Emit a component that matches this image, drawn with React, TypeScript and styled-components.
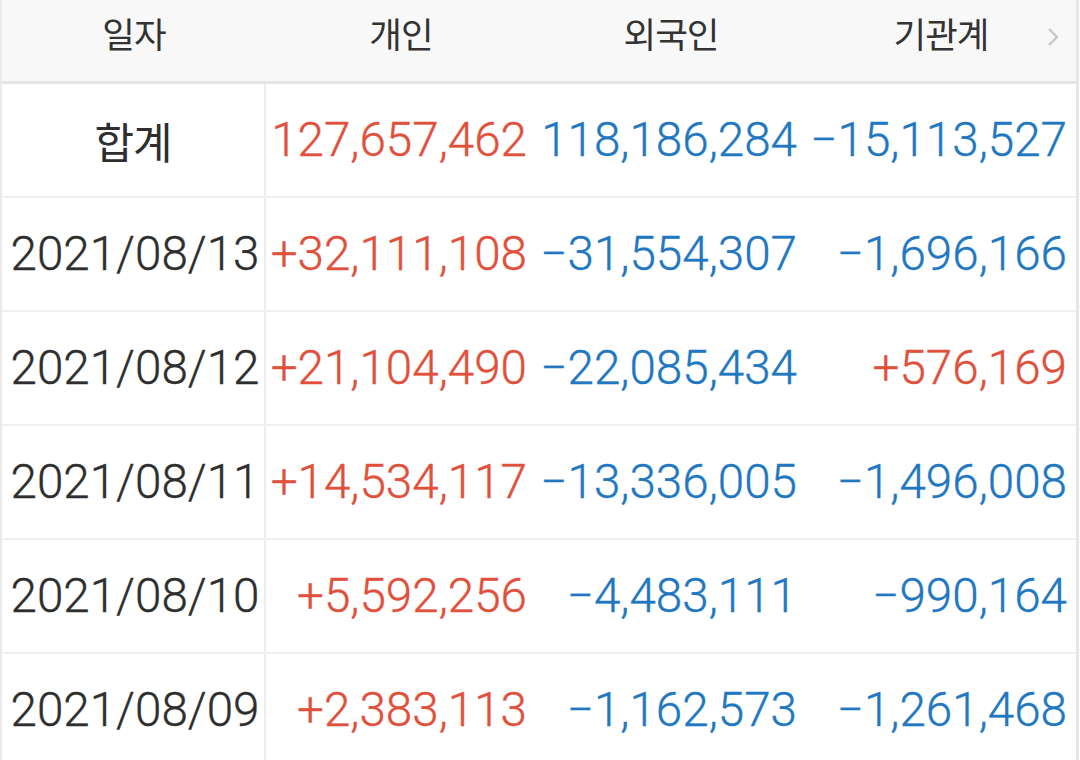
import React from "react";
import styled, { createGlobalStyle } from "styled-components";

const GlobalStyle = createGlobalStyle`
  html, body {
    margin: 0;
    padding: 0;
    background: #ffffff;
  }
  body {
    font-family: Roboto, "Noto Sans CJK KR", sans-serif;
    -webkit-font-smoothing: antialiased;
  }
`;

const Table = styled.div`
  width: 1079px;
  border-left: 2px solid #ebebeb;
  border-right: 3px solid #e6e6e6;
  box-sizing: border-box;
  overflow: hidden;
  height: 760px;
`;

const Grid = styled.div`
  display: grid;
  grid-template-columns: 264px 270px 270px 270px;
`;

const HeaderRow = styled(Grid)`
  height: 81px;
  background: #f8f8f8;
  border-bottom: 3px solid #e4e4e4;
`;

const HeadCell = styled.div`
  position: relative;
  display: flex;
  align-items: center;
  justify-content: center;
  padding-bottom: 16px;
  font-family: "Noto Sans CJK KR", sans-serif;
  font-size: 35.5px;
  color: #333333;
  letter-spacing: -1px;
`;

const Chevron = styled.svg`
  position: absolute;
  right: 16px;
  top: 26px;
  width: 14px;
  height: 22px;
`;

const BodyRow = styled(Grid)`
  height: 112px;
  border-bottom: 2px solid #f0f0f0;
`;

const DateCell = styled.div<{ $kr?: boolean }>`
  display: flex;
  align-items: center;
  justify-content: center;
  border-right: 2px solid #ececec;
  font-family: ${(p) => (p.$kr ? '"Noto Sans CJK KR", sans-serif' : "Roboto, sans-serif")};
  font-weight: ${(p) => (p.$kr ? 400 : 300)};
  font-size: ${(p) => (p.$kr ? "43px" : "47.6px")};
  color: #2e2e2e;
  letter-spacing: ${(p) => (p.$kr ? "-1px" : "0")};
  padding-left: ${(p) => (p.$kr ? "0" : "4px")};
  -webkit-text-stroke: ${(p) => (p.$kr ? "0" : "0.35px")};
`;

const NumCell = styled.div<{ $tone: "up" | "down" }>`
  display: flex;
  align-items: center;
  justify-content: flex-end;
  padding-right: 9px;
  font-family: Roboto, sans-serif;
  font-weight: 300;
  font-size: 47.6px;
  color: ${(p) => (p.$tone === "up" ? "#e0503b" : "#2178c0")};
  -webkit-text-stroke: 0.35px;
  white-space: nowrap;
`;

type Row = { date: string; vals: string[] };

const rows: Row[] = [
  { date: "합계", vals: ["127,657,462", "118,186,284", "\u221215,113,527"] },
  { date: "2021/08/13", vals: ["+32,111,108", "\u221231,554,307", "\u22121,696,166"] },
  { date: "2021/08/12", vals: ["+21,104,490", "\u221222,085,434", "+576,169"] },
  { date: "2021/08/11", vals: ["+14,534,117", "\u221213,336,005", "\u22121,496,008"] },
  { date: "2021/08/10", vals: ["+5,592,256", "\u22124,483,111", "\u2212990,164"] },
  { date: "2021/08/09", vals: ["+2,383,113", "\u22121,162,573", "\u22121,261,468"] },
];

const toneOf = (v: string, rowIdx: number, colIdx: number): "up" | "down" => {
  if (rowIdx === 0) return colIdx === 0 ? "up" : "down";
  return v.startsWith("+") ? "up" : "down";
};

export default function App() {
  return (
    <>
      <GlobalStyle />
      <Table>
        <HeaderRow>
          <HeadCell>일자</HeadCell>
          <HeadCell>개인</HeadCell>
          <HeadCell>외국인</HeadCell>
          <HeadCell>
            기관계
            <Chevron viewBox="0 0 14 22">
              <path d="M3 3 L11 11 L3 19" fill="none" stroke="#c8c8c8" strokeWidth="2.4" />
            </Chevron>
          </HeadCell>
        </HeaderRow>
        {rows.map((r, i) => (
          <BodyRow key={r.date}>
            <DateCell $kr={i === 0}>{r.date}</DateCell>
            {r.vals.map((v, j) => (
              <NumCell key={j} $tone={toneOf(v, i, j)}>
                {v}
              </NumCell>
            ))}
          </BodyRow>
        ))}
      </Table>
    </>
  );
}
